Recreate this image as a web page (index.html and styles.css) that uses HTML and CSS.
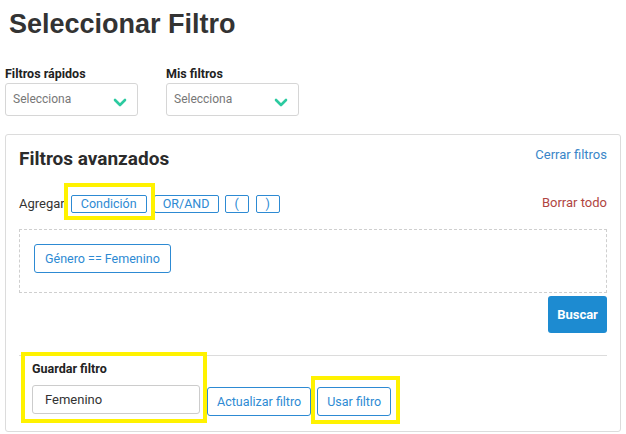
FILE: index.html
```html
<!DOCTYPE html>
<html lang="es">
<head>
<meta charset="utf-8">
<title>Seleccionar Filtro</title>
<link rel="stylesheet" href="styles.css">
</head>
<body>
<h1 class="title">Seleccionar Filtro</h1>

<div class="quick">
  <div class="field">
    <label class="field-label">Filtros rápidos</label>
    <div class="select"><span class="placeholder">Selecciona</span>
      <svg class="chev" width="14" height="9" viewBox="0 0 14 9"><path d="M2 2 L7 7 L12 2" fill="none" stroke="#2ccaa0" stroke-width="2.6" stroke-linecap="round" stroke-linejoin="round"/></svg>
    </div>
  </div>
  <div class="field">
    <label class="field-label">Mis filtros</label>
    <div class="select"><span class="placeholder">Selecciona</span>
      <svg class="chev" width="14" height="9" viewBox="0 0 14 9"><path d="M2 2 L7 7 L12 2" fill="none" stroke="#2ccaa0" stroke-width="2.6" stroke-linecap="round" stroke-linejoin="round"/></svg>
    </div>
  </div>
</div>

<section class="card">
  <div class="card-head">
    <h2 class="card-title">Filtros avanzados</h2>
    <a class="link">Cerrar filtros</a>
  </div>

  <div class="add-row">
    <span class="add-label">Agregar</span>
    <span class="hl hl-cond"><button class="btn btn-sm">Condición</button></span>
    <button class="btn btn-sm btn-orand">OR/AND</button>
    <button class="btn btn-sm btn-par">(</button>
    <button class="btn btn-sm btn-par">)</button>
    <a class="link-danger">Borrar todo</a>
  </div>

  <div class="query">
    <button class="btn btn-chip">Género == Femenino</button>
  </div>

  <div class="search-row">
    <button class="btn-primary">Buscar</button>
  </div>

  <div class="save">
    <div class="hl hl-save">
      <label class="field-label save-label">Guardar filtro</label>
      <input class="input" type="text" value="Femenino">
    </div>
    <button class="btn btn-md btn-update">Actualizar filtro</button>
    <span class="hl hl-use"><button class="btn btn-md">Usar filtro</button></span>
  </div>
</section>
</body>
</html>
```

FILE: styles.css
```css
* { box-sizing: border-box; }
html, body { margin: 0; padding: 0; background: #fff; }
body {
  font-family: Roboto, "Liberation Sans", sans-serif;
  color: #333;
  width: 626px;
  height: 434px;
  overflow: hidden;
}

.title {
  font-family: "Liberation Sans", Arial, sans-serif;
  font-weight: 700;
  font-size: 27px;
  line-height: 36px;
  color: #333;
  margin: 0;
  padding: 6px 0 0 9px;
}

.quick {
  display: flex;
  gap: 28px;
  padding: 25px 0 0 5px;
}
.field { display: flex; flex-direction: column; }
.field-label {
  font-size: 12.5px;
  font-weight: 700;
  color: #222;
  line-height: 14px;
  margin-bottom: 2px;
}
.select {
  width: 133px;
  height: 33px;
  border: 1px solid #d6d6d6;
  border-radius: 3px;
  display: flex;
  align-items: center;
  justify-content: space-between;
  padding: 0 10px 0 7px;
}
.placeholder { font-size: 12px; color: #777; margin-top: -1px; }
.chev { margin-top: 5px; }

.card {
  margin: 18px 0 0 5px;
  width: 616px;
  height: 298px;
  border: 1px solid #dcdcdc;
  border-radius: 3px;
  padding: 12px 13px 0 13px;
}
.card-head {
  display: flex;
  justify-content: space-between;
  align-items: flex-start;
}
.card-title {
  margin: 0;
  font-size: 19px;
  font-weight: 700;
  line-height: 24px;
  color: #2b2b2b;
}
.link {
  color: #3a86c8;
  font-size: 13px;
  line-height: 16px;
  margin-top: 0;
}

.add-row {
  display: flex;
  align-items: center;
  margin-top: 24px;
  height: 18px;
}
.add-label { font-size: 13px; color: #333; margin-right: 6px; margin-top: -1px; }
.link-danger { margin-left: auto; color: #b0453f; font-size: 13px; margin-top: -4px; }

.btn {
  font-family: Roboto, "Liberation Sans", sans-serif;
  background: #fff;
  border: 1px solid #2d8ad3;
  color: #2d8ad3;
  border-radius: 2px;
  cursor: pointer;
}
.btn-sm {
  height: 18px;
  padding: 0 9px;
  font-size: 12.5px;
  line-height: 16px;
}
.btn-orand { margin-left: 7px; width: 65px; padding: 0; }
.btn-par { margin-left: 6px; width: 24px; padding: 0; }
.btn-par + .btn-par { margin-left: 7px; }

.hl { position: relative; display: inline-flex; }
.hl::after {
  content: "";
  position: absolute;
  border: 4px solid #fff200;
  pointer-events: none;
}
.hl-cond::after { left: -7px; right: -8px; top: -12px; bottom: -7px; }

.query {
  margin-top: 16px;
  height: 64px;
  border: 1px dashed #cfcfcf;
  padding: 14px 14px;
}
.btn-chip {
  height: 29px;
  padding: 0 10px;
  font-size: 12.5px;
  border-radius: 3px;
}

.search-row { display: flex; justify-content: flex-end; margin-top: 3px; }
.btn-primary {
  font-family: Roboto, "Liberation Sans", sans-serif;
  width: 59px;
  height: 37px;
  background: #1d8bd1;
  color: #fff;
  border: none;
  border-radius: 3px;
  font-weight: 700;
  font-size: 13px;
}

.save {
  margin-top: 22px;
  border-top: 1px solid #dcdcdc;
  display: flex;
  align-items: flex-end;
  padding: 6px 13px 0 13px;
}
.hl-save { flex-direction: column; }
.hl-save::after { left: -11px; right: -7px; top: -10px; bottom: -9px; }
.save-label { margin-bottom: 9px; }
.input {
  width: 168px;
  height: 29px;
  border: 1px solid #ccc;
  border-radius: 3px;
  padding: 0 12px;
  font-family: Roboto, "Liberation Sans", sans-serif;
  font-size: 13px;
  color: #333;
}
.btn-md {
  height: 29px;
  padding: 0 9px;
  font-size: 12.5px;
  border-radius: 3px;
  margin-bottom: -2px;
}
.btn-update { margin-left: 7px; }
.hl-use { margin-left: 6px; margin-bottom: -2px; }
.hl-use .btn-md { margin-bottom: 0; }
.hl-use::after { left: -6px; right: -9px; top: -11px; bottom: -8px; }
```
